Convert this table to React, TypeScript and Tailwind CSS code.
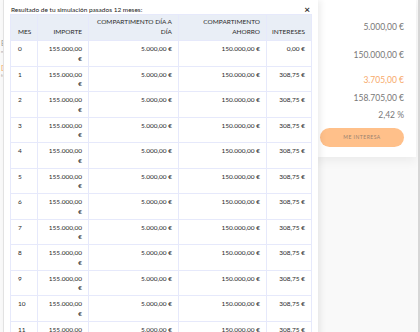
import React from 'react';

const rows = Array.from({ length: 12 }, (_, i) => ({
  mes: i,
  importe: '155.000,00 €',
  dia: '5.000,00 €',
  ahorro: '150.000,00 €',
  intereses: i === 0 ? '0,00 €' : '308,75 €',
}));

const SummaryCard = () => (
  <div className="w-[100px] h-[157px] bg-white shadow-[0_4px_10px_rgba(0,0,0,0.06)] flex flex-col items-end pr-[12px] text-[8.5px] leading-[11px] text-[#777]">
    <div className="mt-[22px]">5.000,00 €</div>
    <div className="mt-[17px]">150.000,00 €</div>
    <div className="mt-[14px] text-[#f7a96a]">3.705,00 €</div>
    <div className="mt-[7px]">158.705,00 €</div>
    <div className="mt-[6px]">2,42 %</div>
    <button className="mt-[7px] w-[84px] h-[19px] rounded-full bg-[#ffc08a] text-[5px] tracking-[0.5px] text-[#9a8070]">
      ME INTERESA
    </button>
  </div>
);

export default function App() {
  return (
    <div className="relative w-[420px] h-[332px] overflow-hidden bg-[#f9f9f9] font-['Lato',sans-serif]">
      {/* page behind the modal */}
      <div className="flex h-full">
        <div className="w-[316px] text-[7px] text-[#999] pt-[38px] pl-[1px]">
          <div>B</div>
          <div className="text-[4px]">n</div>
          <div className="mt-[8px] text-[#f7a96a]">D</div>
          <div className="text-[4px]">fu</div>
        </div>
        <SummaryCard />
        <div className="flex-1" />
        <div className="w-[2px] bg-[#d6d6d6]" />
      </div>

      {/* modal */}
      <div className="absolute left-[3px] top-0 w-[315px] h-[400px] bg-white border-l border-[#e2e2e2] shadow-[3px_0_6px_rgba(0,0,0,0.07)] px-[6px]">
        <div className="flex items-start justify-between pt-[5px] h-[14px]">
          <span className="text-[6.5px] text-[#222] ml-[1px]">Resultado de tu simulación pasados 12 meses:</span>
          <span className="text-[10px] leading-[8px] font-bold text-[#333] mr-[2px]">×</span>
        </div>
        <table className="table-fixed w-[301px] border-collapse text-[6.5px] text-[#2a2a2a]">
          <colgroup>
            <col className="w-[27px]" />
            <col className="w-[51px]" />
            <col className="w-[90px]" />
            <col className="w-[88px]" />
            <col className="w-[45px]" />
          </colgroup>
          <thead>
            <tr className="bg-[#e9eef6] h-[26px]">
              <th className="border border-[#e6e9fb] text-left align-bottom font-normal leading-[10px] pl-[7px] pb-[3px]">MES</th>
              <th className="border border-[#e6e9fb] text-right align-bottom font-normal leading-[10px] pr-[6px] pb-[3px]">IMPORTE</th>
              <th className="border border-[#e6e9fb] text-right align-bottom font-normal leading-[10px] pr-[6px] pl-[4px] pb-[3px]">COMPARTIMENTO DÍA A DÍA</th>
              <th className="border border-[#e6e9fb] text-right align-bottom font-normal leading-[10px] pr-[6px] pl-[20px] pb-[3px]">COMPARTIMENTO AHORRO</th>
              <th className="border border-[#e6e9fb] text-right align-bottom font-normal leading-[10px] pr-[6px] pb-[3px]">INTERESES</th>
            </tr>
          </thead>
          <tbody>
            {rows.map((r) => (
              <tr key={r.mes} className="h-[25.5px]">
                <td className="border border-[#e6e9fb] align-top text-left leading-[9.5px] pl-[7px] pt-[3px] pb-[2px]">{r.mes}</td>
                <td className="border border-[#e6e9fb] align-top text-right leading-[9.5px] pr-[6px] pl-[8px] pt-[3px] pb-[2px]">{r.importe}</td>
                <td className="border border-[#e6e9fb] align-top text-right leading-[9.5px] pr-[6px] pt-[3px] pb-[2px]">{r.dia}</td>
                <td className="border border-[#e6e9fb] align-top text-right leading-[9.5px] pr-[6px] pt-[3px] pb-[2px]">{r.ahorro}</td>
                <td className="border border-[#e6e9fb] align-top text-right leading-[9.5px] pr-[6px] pt-[3px] pb-[2px]">{r.intereses}</td>
              </tr>
            ))}
          </tbody>
        </table>
      </div>
    </div>
  );
}
